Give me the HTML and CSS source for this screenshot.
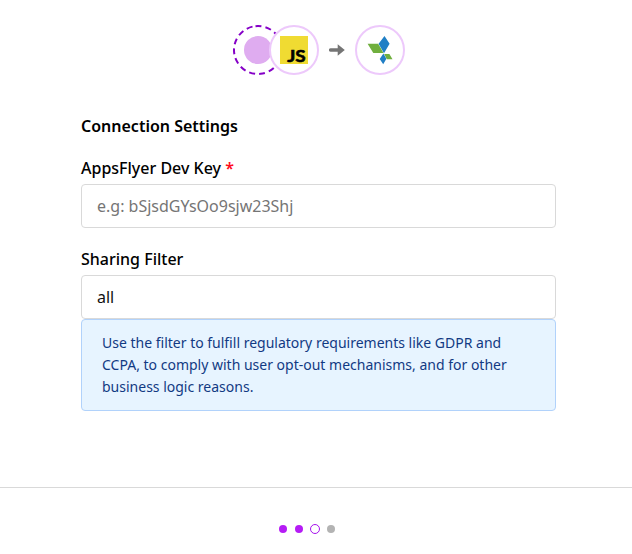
FILE: index.html
```html
<!DOCTYPE html>
<html lang="en">
<head>
<meta charset="utf-8">
<title>Connection Settings</title>
<link rel="stylesheet" href="styles.css">
</head>
<body>
<main class="wizard">
  <header class="route">
    <svg class="badge" viewBox="0 0 50 50" aria-hidden="true">
      <circle class="dashed" cx="25" cy="25" r="24" transform="rotate(-96 25 25)"/>
      <circle class="dot" cx="25" cy="25" r="14"/>
    </svg>
    <svg class="badge badge-source" viewBox="0 0 50 50">
      <circle class="ring" cx="25" cy="25" r="24"/>
      <rect class="js-tile" x="11" y="11" width="28" height="28"/>
      <text class="js-text" x="18.2" y="36.5" textLength="18.5" lengthAdjust="spacingAndGlyphs">JS</text>
    </svg>
    <svg class="arrow" viewBox="0 0 16 14" aria-hidden="true">
      <path d="M1.7 5.2H8.7V1.2L15.8 7 8.7 12.8V8.8H1.7A1.8 1.8 0 0 1 1.7 5.2Z"/>
    </svg>
    <svg class="badge" viewBox="0 0 50 50" aria-hidden="true">
      <circle class="ring" cx="25" cy="25" r="24"/>
      <path class="leaf-green" d="M12.6 18.8H23.2L28.5 28H18.3ZM29.2 29H34.4L37.5 34.2H31.8Z"/>
      <path class="leaf-blue" d="M29.5 11L34.6 18.7 29 28.3 23.6 18.7ZM28.4 28.6L31.4 33.8 28.2 39.3 24.7 34Z"/>
    </svg>
  </header>
  <form class="settings">
    <h1 class="title">Connection Settings</h1>
    <label class="label" for="key">AppsFlyer Dev Key <span class="required">*</span></label>
    <input class="input" id="key" type="text" placeholder="e.g: bSjsdGYsOo9sjw23Shj">
    <label class="label label-filter" for="filter">Sharing Filter</label>
    <input class="input" id="filter" type="text" value="all">
    <p class="info">Use the filter to fulfill regulatory requirements like GDPR and CCPA, to comply with user opt-out mechanisms, and for other business logic reasons.</p>
  </form>
  <footer class="steps">
    <span class="step done"></span>
    <span class="step done"></span>
    <span class="step current"></span>
    <span class="step"></span>
  </footer>
</main>
</body>
</html>
```
FILE: styles.css
```css
* { box-sizing: border-box; }
body {
  margin: 0;
  background: #fff;
  color: #000;
  font: 16px/24px "Noto Sans", sans-serif;
}
.wizard {
  display: flex;
  flex-direction: column;
  height: 554px;
  overflow: hidden;
}
.route {
  display: flex;
  align-items: center;
  justify-content: center;
  padding: 25px 0 0 6px;
}
.badge { width: 50px; height: 50px; }
.badge-source { margin-left: -14px; }
.dashed {
  fill: #fff;
  stroke: #8500c7;
  stroke-width: 2;
  stroke-dasharray: 6 4.05;
}
.dot { fill: #dfacf0; }
.ring { fill: #fff; stroke: #edc9fb; stroke-width: 2; }
.js-tile { fill: #f0db32; }
.js-text { font: 700 17.5px "Lato", sans-serif; fill: #000; stroke: #000; stroke-width: .6; }
.arrow { width: 16px; height: 14px; margin: 0 10px; fill: #757575; }
.leaf-green { fill: #70af3e; }
.leaf-blue { fill: #207fc5; }
.settings {
  display: flex;
  flex-direction: column;
  width: 475px;
  margin: 39px 0 0 81px;
}
.title { margin: 0 0 18px; font-size: 16px; font-weight: 600; }
.label { height: 28px; font-weight: 500; }
.label-filter { margin-top: 19px; }
.required { color: #ff0a20; font-weight: 600; }
.input {
  width: 100%;
  height: 44px;
  padding: 0 15px;
  border: 1px solid #d9d9d9;
  border-radius: 4px;
  outline: 0;
  background: #fff;
  color: #111;
  font: inherit;
}
.input::placeholder { color: #757575; opacity: 1; }
.info {
  height: 92px;
  margin: 0;
  padding: 12px 20px;
  border: 1px solid #b1d2fb;
  border-radius: 4px;
  background: #e7f4ff;
  color: #123a83;
  font-size: 14px;
  line-height: 22px;
}
.steps {
  display: flex;
  justify-content: center;
  align-items: center;
  gap: 6px;
  height: 67px;
  margin-top: auto;
  padding: 16px 18px 0 0;
  border-top: 1px solid #d9d9d9;
}
.step {
  width: 8px;
  height: 8px;
  margin: 0 1px;
  border-radius: 50%;
  background: #b3b3b3;
}
.done { background: #b51cf5; }
.current {
  width: 10px;
  height: 10px;
  margin: 0;
  border: 1px solid #a712ed;
  background: #fff;
}
```
